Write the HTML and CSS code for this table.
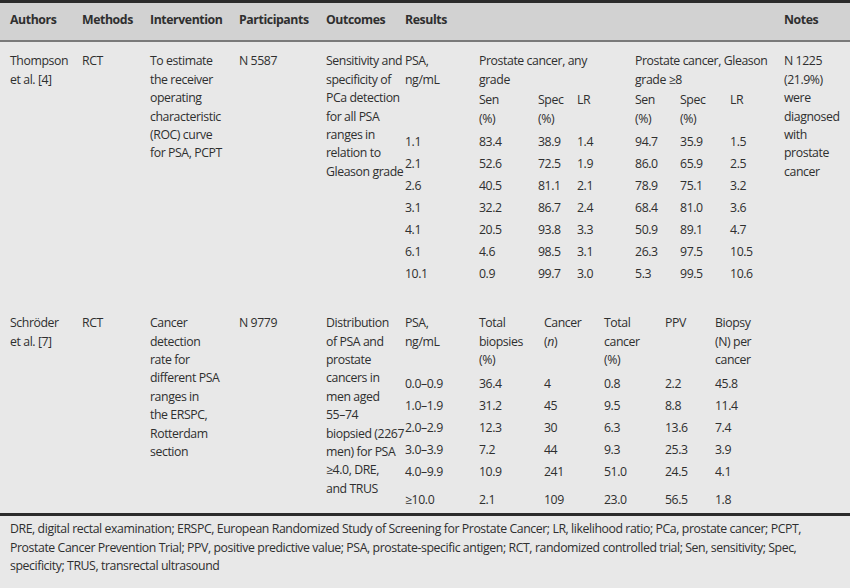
FILE: index.html
```html
<!DOCTYPE html>
<html lang="en">
<head>
<meta charset="utf-8">
<title>PSA studies</title>
<link rel="stylesheet" href="styles.css">
</head>
<body>
<table class="main">
  <colgroup>
    <col class="c-auth"><col class="c-meth"><col class="c-int"><col class="c-part"><col class="c-out"><col class="c-res"><col class="c-notes">
  </colgroup>
  <thead>
    <tr>
      <th>Authors</th><th>Methods</th><th>Intervention</th><th>Participants</th><th>Outcomes</th><th>Results</th><th>Notes</th>
    </tr>
  </thead>
  <tbody>
    <tr class="study first">
      <td>Thompson<br>et al. [4]</td>
      <td>RCT</td>
      <td>To estimate<br>the receiver<br>operating<br>characteristic<br>(ROC) curve<br>for PSA, PCPT</td>
      <td>N 5587</td>
      <td>Sensitivity and<br>specificity of<br>PCa detection<br>for all PSA<br>ranges in<br>relation to<br>Gleason grade</td>
      <td class="res">
        <table class="sub">
          <colgroup>
            <col class="t1"><col class="t2"><col class="t3"><col class="t4"><col class="t5"><col class="t6"><col class="t7">
          </colgroup>
          <tr class="hd h1">
            <td rowspan="2">PSA,<br>ng/mL</td>
            <td colspan="3">Prostate cancer, any<br>grade</td>
            <td colspan="3">Prostate cancer, Gleason<br>grade ≥8</td>
          </tr>
          <tr class="hd h2">
            <td>Sen<br>(%)</td><td>Spec<br>(%)</td><td>LR</td>
            <td>Sen<br>(%)</td><td>Spec<br>(%)</td><td>LR</td>
          </tr>
          <tr class="dr"><td>1.1</td><td>83.4</td><td>38.9</td><td>1.4</td><td>94.7</td><td>35.9</td><td>1.5</td></tr>
          <tr class="dr"><td>2.1</td><td>52.6</td><td>72.5</td><td>1.9</td><td>86.0</td><td>65.9</td><td>2.5</td></tr>
          <tr class="dr"><td>2.6</td><td>40.5</td><td>81.1</td><td>2.1</td><td>78.9</td><td>75.1</td><td>3.2</td></tr>
          <tr class="dr"><td>3.1</td><td>32.2</td><td>86.7</td><td>2.4</td><td>68.4</td><td>81.0</td><td>3.6</td></tr>
          <tr class="dr"><td>4.1</td><td>20.5</td><td>93.8</td><td>3.3</td><td>50.9</td><td>89.1</td><td>4.7</td></tr>
          <tr class="dr"><td>6.1</td><td>4.6</td><td>98.5</td><td>3.1</td><td>26.3</td><td>97.5</td><td>10.5</td></tr>
          <tr class="dr"><td>10.1</td><td>0.9</td><td>99.7</td><td>3.0</td><td>5.3</td><td>99.5</td><td>10.6</td></tr>
        </table>
      </td>
      <td>N 1225<br>(21.9%)<br>were<br>diagnosed<br>with<br>prostate<br>cancer</td>
    </tr>
    <tr class="study second">
      <td>Schröder<br>et al. [7]</td>
      <td>RCT</td>
      <td>Cancer<br>detection<br>rate for<br>different PSA<br>ranges in<br>the ERSPC,<br>Rotterdam<br>section</td>
      <td>N 9779</td>
      <td>Distribution<br>of PSA and<br>prostate<br>cancers in<br>men aged<br>55–74<br>biopsied (2267<br>men) for PSA<br>≥4.0, DRE,<br>and TRUS</td>
      <td class="res">
        <table class="sub">
          <colgroup>
            <col class="s1"><col class="s2"><col class="s3"><col class="s4"><col class="s5"><col class="s6">
          </colgroup>
          <tr class="hd h3">
            <td>PSA,<br>ng/mL</td>
            <td>Total<br>biopsies<br>(%)</td>
            <td>Cancer<br>(<i>n</i>)</td>
            <td>Total<br>cancer<br>(%)</td>
            <td>PPV</td>
            <td>Biopsy<br>(N) per<br>cancer</td>
          </tr>
          <tr class="dr"><td>0.0–0.9</td><td>36.4</td><td>4</td><td>0.8</td><td>2.2</td><td>45.8</td></tr>
          <tr class="dr"><td>1.0–1.9</td><td>31.2</td><td>45</td><td>9.5</td><td>8.8</td><td>11.4</td></tr>
          <tr class="dr"><td>2.0–2.9</td><td>12.3</td><td>30</td><td>6.3</td><td>13.6</td><td>7.4</td></tr>
          <tr class="dr"><td>3.0–3.9</td><td>7.2</td><td>44</td><td>9.3</td><td>25.3</td><td>3.9</td></tr>
          <tr class="dr"><td>4.0–9.9</td><td>10.9</td><td>241</td><td>51.0</td><td>24.5</td><td>4.1</td></tr>
          <tr class="dr last"><td>≥10.0</td><td>2.1</td><td>109</td><td>23.0</td><td>56.5</td><td>1.8</td></tr>
        </table>
      </td>
      <td></td>
    </tr>
  </tbody>
</table>
<p class="foot">DRE, digital rectal examination; ERSPC, European Randomized Study of Screening for Prostate Cancer; LR, likelihood ratio; PCa, prostate cancer; PCPT, Prostate Cancer Prevention Trial; PPV, positive predictive value; PSA, prostate-specific antigen; RCT, randomized controlled trial; Sen, sensitivity; Spec, specificity; TRUS, transrectal ultrasound</p>
</body>
</html>
```

FILE: styles.css
```css
html, body {
  margin: 0;
  padding: 0;
}

body {
  background: #e8e8e8;
  color: #2f2f2f;
  font-family: "Open Sans", "Noto Sans", sans-serif;
  font-size: 12.3px;
  letter-spacing: -0.42px;
  line-height: 18.4px;
}

.main {
  width: 850px;
  border-collapse: collapse;
  table-layout: fixed;
  border-top: 3px solid #2b2b2b;
}

.c-auth { width: 82px; }
.c-meth { width: 68px; }
.c-int { width: 89px; }
.c-part { width: 87px; }
.c-out { width: 79px; }
.c-res { width: 379px; }
.c-notes { width: 66px; }

.main th,
.main td {
  padding: 0;
  text-align: left;
  vertical-align: top;
}

.main thead th {
  background: #d2d2d2;
  font-weight: bold;
  padding-top: 8px;
  padding-bottom: 11px;
  border-bottom: 2px solid #7a7a7a;
}

.main th:first-child,
.study > td:first-child {
  padding-left: 10px;
}

.study > td {
  padding-top: 10px;
  white-space: nowrap;
}

.study.first > td {
  padding-bottom: 19px;
}

.study.second > td {
  padding-bottom: 2px;
}

.sub {
  width: 379px;
  border-collapse: collapse;
  table-layout: fixed;
}

.t1 { width: 74px; }
.t2 { width: 59px; }
.t3 { width: 39px; }
.t4 { width: 58px; }
.t5 { width: 45px; }
.t6 { width: 50px; }
.t7 { width: 54px; }

.s1 { width: 74px; }
.s2 { width: 65px; }
.s3 { width: 60px; }
.s4 { width: 61px; }
.s5 { width: 50px; }
.s6 { width: 69px; }

.sub td {
  padding: 0;
  vertical-align: top;
  white-space: nowrap;
}

.sub .h1 td {
  padding-bottom: 2.2px;
}

.sub .h2 td {
  padding-bottom: 3px;
}

.sub .h3 td {
  padding-bottom: 3.8px;
}

.sub .dr td {
  padding: 2px 0 1.6px;
}

.sub .dr.last td {
  padding-top: 8px;
}

.foot {
  margin: 0;
  border-top: 3px solid #2b2b2b;
  padding: 4px 10px 8px;
}
```
